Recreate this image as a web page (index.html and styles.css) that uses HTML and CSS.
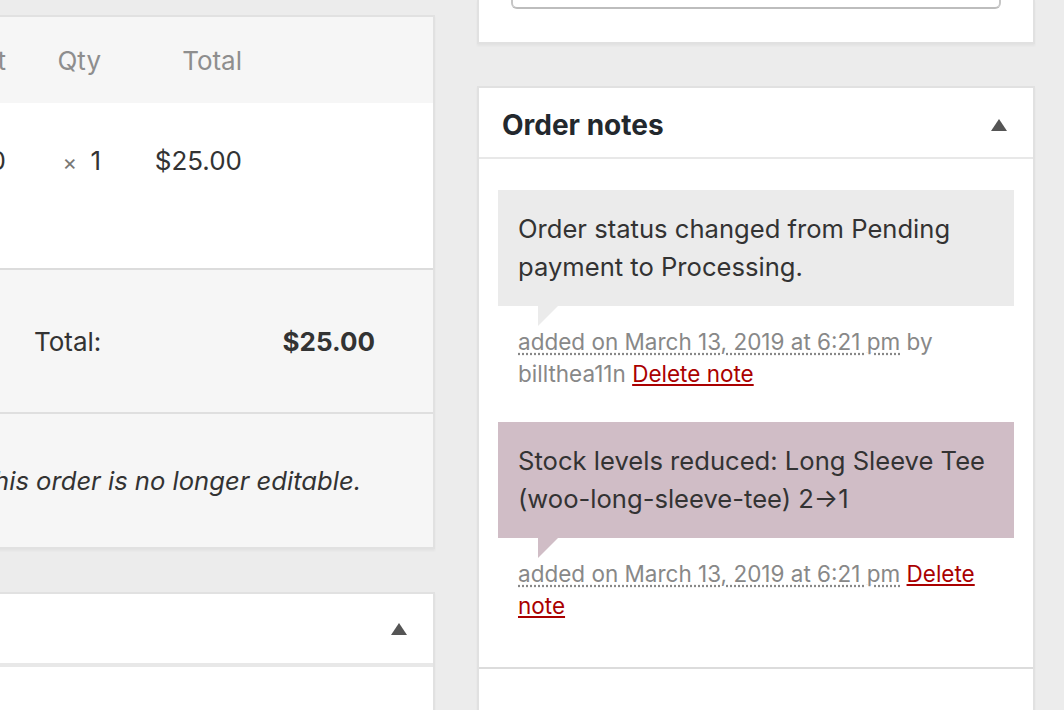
FILE: index.html
```html
<!DOCTYPE html>
<html>
<head>
  <meta charset="UTF-8">
  <title>Edit order</title>
  <link rel="stylesheet" href="styles.css">
</head>
<body>
  <div class="columns">
    <div class="main-column">
      <div class="postbox order-items">
        <div class="items-row items-head">
          <span class="cell name">Item</span>
          <span class="cell cost">Cost</span>
          <span class="cell qty">Qty</span>
          <span class="cell total">Total</span>
        </div>
        <div class="items-row items-line">
          <span class="cell name">Long Sleeve Tee</span>
          <span class="cell cost">$25.00</span>
          <span class="cell qty"><small class="times">&times;</small> 1</span>
          <span class="cell total">$25.00</span>
        </div>
        <div class="data-row totals">
          <span class="label">Total:</span>
          <strong class="amount">$25.00</strong>
        </div>
        <div class="data-row add-items">
          <span class="description">This order is no longer editable.</span>
        </div>
      </div>

      <div class="postbox closed-box">
        <div class="hndle">
          <span class="hndle-title">Custom Fields</span>
          <svg class="toggle" width="16" height="12" viewBox="0 0 16 12"><polygon points="8,0 16,12 0,12" fill="#555"/></svg>
        </div>
        <div class="inside"></div>
      </div>
    </div>

    <div class="side-column">
      <div class="postbox actions-box">
        <div class="field-end"></div>
      </div>

      <div class="postbox notes-box">
        <div class="hndle">
          <h2 class="hndle-title">Order notes</h2>
          <svg class="toggle" width="16" height="12" viewBox="0 0 16 12"><polygon points="8,0 16,12 0,12" fill="#555"/></svg>
        </div>
        <ul class="order-notes">
          <li class="note">
            <div class="note-content">Order status changed from Pending payment to Processing.</div>
            <p class="meta">
              <abbr class="exact-date" title="2019-03-13 18:21:07">added on March 13, 2019 at 6:21 pm</abbr>
              by billthea11n <a href="#" class="delete-note">Delete note</a>
            </p>
          </li>
          <li class="note system-note">
            <div class="note-content">Stock levels reduced: Long Sleeve Tee (woo-long-sleeve-tee) 2&rarr;1</div>
            <p class="meta">
              <abbr class="exact-date" title="2019-03-13 18:21:07">added on March 13, 2019 at 6:21 pm</abbr>
              <a href="#" class="delete-note">Delete note</a>
            </p>
          </li>
        </ul>
        <div class="add-note"></div>
      </div>
    </div>
  </div>
</body>
</html>
```

FILE: styles.css
```css
html, body {
  height: 100%;
}

body {
  margin: 0;
  overflow: hidden;
  background-color: #ececec;
  font-family: Inter, "Liberation Sans", Arial, sans-serif;
  font-size: 26px;
  color: #333;
}

.columns {
  display: flex;
  gap: 42px;
  align-items: flex-start;
}

/* Left column runs off the left edge of the window */
.main-column {
  flex: none;
  width: 635px;
  margin-left: -200px;
  padding-top: 15px;
}

.side-column {
  flex: none;
  width: 558px;
}

.postbox {
  box-sizing: border-box;
  background-color: #fff;
  border: 2px solid #e1e1e1;
  box-shadow: 0 2px 2px rgba(0, 0, 0, 0.04);
}

/* Order items */
.items-row {
  display: grid;
  grid-template-columns: 100px 104px 95px 141px 1fr;
}

.cell {
  text-align: right;
  white-space: nowrap;
}

.cell.name {
  text-align: left;
  visibility: hidden;
}

.items-head {
  height: 86px;
  align-items: center;
  background-color: #f6f6f6;
  color: #8e8e8e;
}

.items-line {
  height: 167px;
  box-sizing: border-box;
  padding-top: 39px;
  line-height: 38px;
  border-bottom: 2px solid #dcdcdc;
}

.times {
  font-size: 22px;
  color: #777;
  margin-right: 6px;
}

.data-row {
  background-color: #f6f6f6;
  display: flex;
  align-items: center;
}

.totals {
  height: 142px;
  padding: 0 58px 0 232px;
  justify-content: space-between;
  border-bottom: 2px solid #dfdfdf;
}

.totals .amount {
  font-weight: bold;
}

.add-items {
  height: 133px;
  justify-content: flex-end;
  padding-right: 72px;
}

.description {
  font-style: italic;
  font-size: 25.6px;
}

/* Handle bars */
.hndle {
  display: flex;
  align-items: center;
  justify-content: space-between;
  box-sizing: border-box;
  height: 71px;
  padding: 4px 26px 0 23px;
}

.hndle-title {
  margin: 0;
  font-size: 28px;
  font-weight: bold;
  color: #23282d;
}

.closed-box {
  margin-top: 43px;
}

.closed-box .hndle {
  height: 73px;
  padding-top: 0;
  border-bottom: 4px solid #e8e8e8;
}

.closed-box .hndle-title {
  visibility: hidden;
}

.closed-box .inside {
  height: 80px;
}

/* Side column */
.actions-box {
  height: 44px;
  border-top: none;
  padding: 0 32px;
}

.field-end {
  height: 7px;
  border: 2px solid #c6c6c6;
  border-top: none;
  border-bottom-color: #bdbdbd;
  border-radius: 0 0 6px 6px;
}

.notes-box {
  margin-top: 42px;
}

.notes-box .hndle {
  border-bottom: 2px solid #e8e8e8;
}

.order-notes {
  list-style: none;
  margin: 31px 0 0;
  padding: 0 19px;
}

.note {
  margin-bottom: 12px;
}

.note-content {
  position: relative;
  background-color: #ebebeb;
  padding: 20px;
  font-size: 25.6px;
  line-height: 38px;
}

.note-content::after {
  content: "";
  position: absolute;
  left: 40px;
  bottom: -20px;
  border-style: solid;
  border-width: 20px 20px 0 0;
  border-color: #ebebeb transparent;
}

.system-note .note-content {
  background-color: #d0bdc6;
}

.system-note .note-content::after {
  border-color: #d0bdc6 transparent;
}

.meta {
  margin: 0;
  padding: 20px;
  font-size: 22.5px;
  line-height: 32px;
  color: #888;
}

.exact-date {
  text-decoration: underline dotted;
  text-underline-offset: 3px;
}

.delete-note {
  color: #a00;
}

.add-note {
  border-top: 2px solid #dcdcdc;
  margin-top: 25px;
  height: 80px;
}
```
